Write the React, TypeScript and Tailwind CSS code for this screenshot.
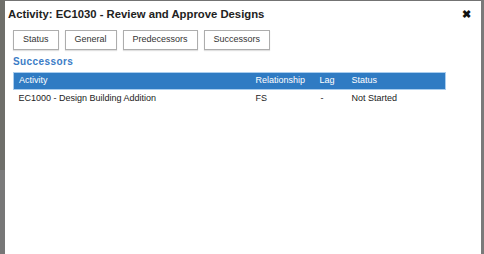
import React from 'react'

const font = { fontFamily: '"Liberation Sans", Arial, sans-serif' }

export default function App() {
    const tabs = ['Status', 'General', 'Predecessors', 'Successors']
    return (
        <div className="w-[484px] h-[254px] flex bg-[#737373] overflow-hidden" style={font}>
            {/* strip of the page behind the overlay */}
            <div className="w-[5px] flex flex-col">
                <div className="h-[170px] bg-[#6f6f6a]"></div>
                <div className="h-[20px] bg-[#7b7b7b]"></div>
                <div className="flex-1 bg-[#777]"></div>
            </div>

            <div className="flex-1 mt-px bg-white flex flex-col">
                <div className="flex items-center justify-between pl-[3px] pr-[10px] h-[26px]">
                    <h1 className="text-[11.3px] font-bold text-[#222]">Activity: EC1030 - Review and Approve Designs</h1>
                    <span className="text-[11px] font-bold text-[#111] leading-none">✖</span>
                </div>

                <div className="flex gap-[6px] pl-[8px] mt-[3px]">
                    {tabs.map(t => (
                        <button
                            key={t}
                            className="h-[20px] px-[9px] text-[9px] text-[#333] bg-white border border-[#adadad] shadow-[0_1px_1px_rgba(0,0,0,0.12)]"
                        >
                            {t}
                        </button>
                    ))}
                </div>

                <div className="pl-[8px] pr-[35px] mt-[5px]">
                    <div className="text-[10px] font-bold text-[#3b7cc6] tracking-[0.4px] leading-[14px]">Successors</div>
                    <table className="w-full mt-[3px] text-[9px] border-collapse">
                        <thead>
                            <tr className="bg-[#2f7bc3] text-white border border-[#a9cdee] h-[17px]">
                                <th className="text-left font-normal pl-[5px]">Activity</th>
                                <th className="text-left font-normal w-[64px]">Relationship</th>
                                <th className="text-left font-normal w-[32px]">Lag</th>
                                <th className="text-left font-normal w-[94px]">Status</th>
                            </tr>
                        </thead>
                        <tbody>
                            <tr className="text-[#222] h-[17px]">
                                <td className="pl-[5px]">EC1000 - Design Building Addition</td>
                                <td>FS</td>
                                <td className="pl-px">-</td>
                                <td>Not Started</td>
                            </tr>
                        </tbody>
                    </table>
                </div>
            </div>

            <div className="w-[3px] bg-[#7a7a7a]"></div>
        </div>
    )
}
